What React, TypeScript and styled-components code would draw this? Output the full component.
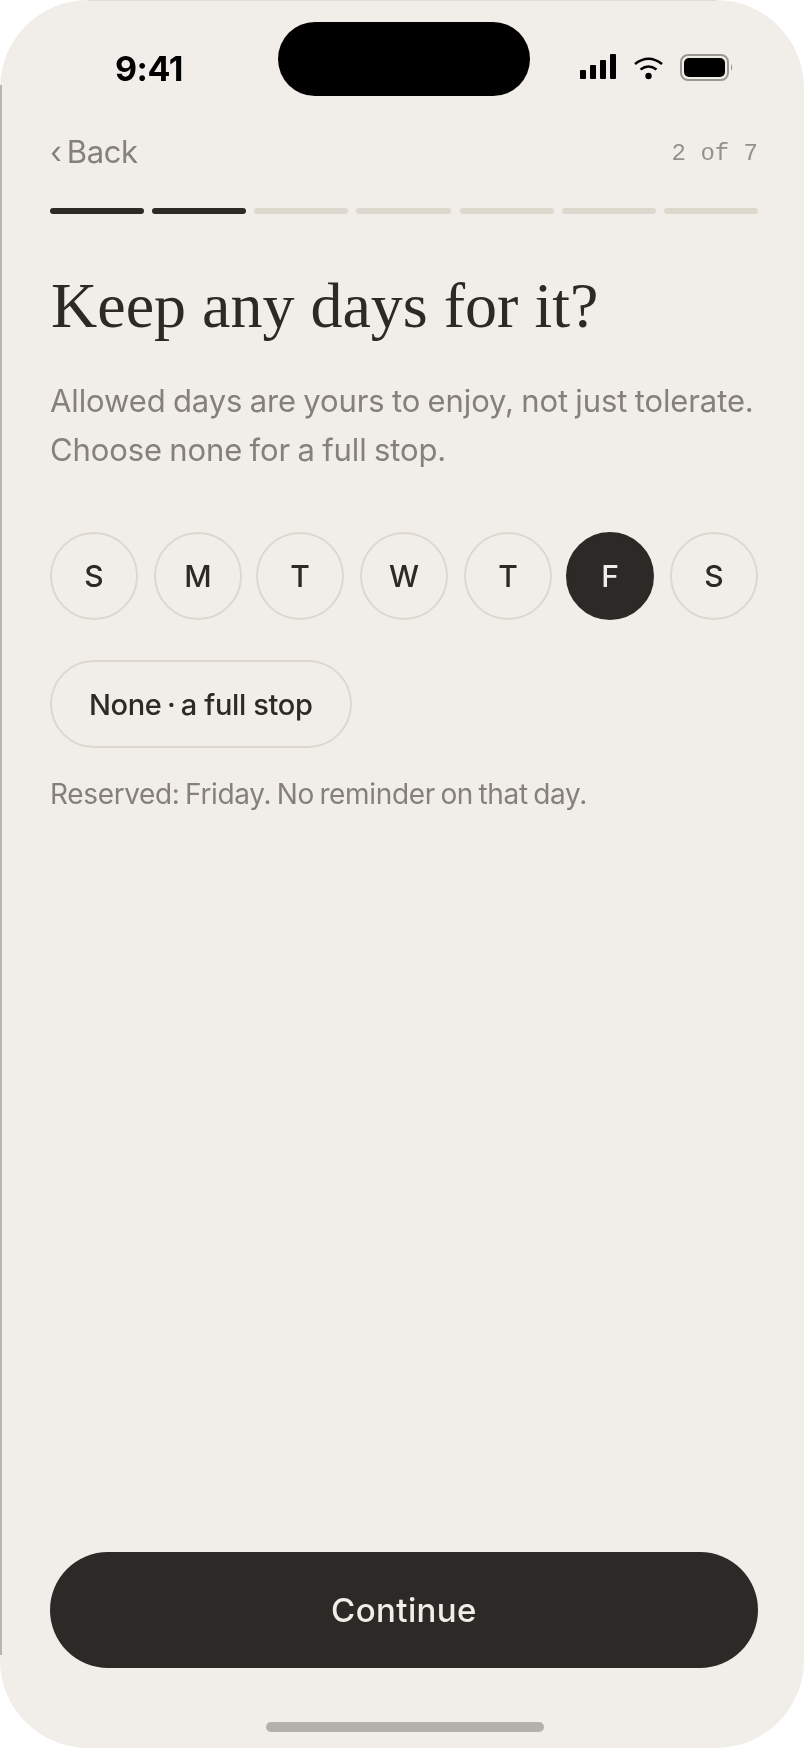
import React from "react";
import styled, { createGlobalStyle } from "styled-components";

const Global = createGlobalStyle`
  html, body { margin: 0; padding: 0; background: #fff; }
  * { box-sizing: border-box; }
`;

const Phone = styled.main`
  position: relative;
  width: 804px;
  height: 1748px;
  display: flex;
  flex-direction: column;
  padding: 0 46px 16px 50px;
  background: #f1eee9;
  border-radius: 88px;
  font-family: Inter, "Liberation Sans", sans-serif;
  color: #2d2926;
  overflow: hidden;
  filter: blur(0.45px);

  &::before {
    content: "";
    position: absolute;
    left: 0;
    top: 85px;
    bottom: 93px;
    width: 2px;
    background: #b8b5af;
  }

  &::after {
    content: "";
    position: absolute;
    left: 88px;
    right: 88px;
    top: 0;
    height: 1px;
    background: #dedbd5;
  }
`;

const Island = styled.div`
  position: absolute;
  left: 278px;
  top: 22px;
  width: 252px;
  height: 74px;
  border-radius: 37px;
  background: #000;
`;

const StatusBar = styled.div`
  height: 95px;
  display: flex;
  align-items: flex-start;
  justify-content: space-between;
  padding: 49px 0 0 65px;
`;

const Time = styled.span`
  font-size: 34px;
  line-height: 40px;
  font-weight: 700;
  color: #000;
  letter-spacing: -0.5px;
`;

const StatusIcons = styled.div`
  display: flex;
  align-items: center;
  margin: 5px 22px 0 0;
`;

const Nav = styled.div`
  margin-top: 37px;
  height: 40px;
  display: flex;
  align-items: center;
  justify-content: space-between;
`;

const Back = styled.span`
  font-size: 31px;
  line-height: 40px;
  color: #85817a;
  letter-spacing: -0.4px;
  word-spacing: -3px;
`;

const StepCount = styled.span`
  margin-top: 2px;
  font-family: "Liberation Mono", monospace;
  font-size: 24px;
  color: #94908a;
`;

const Progress = styled.div`
  margin-top: 36px;
  display: grid;
  grid-template-columns: 102px 102px 102px 104px 102px 102px 94px;
`;

const Segment = styled.div<{ $done: boolean; $wide: boolean }>`
  width: ${(p) => (p.$wide ? "95px" : "94px")};
  height: 6px;
  border-radius: 3px;
  background: ${(p) => (p.$done ? "#2d2926" : "#dcd8cd")};
`;

const Title = styled.h1`
  margin: 56px 0 0;
  padding-left: 1px;
  font-family: "Liberation Serif", serif;
  font-size: 64px;
  line-height: 72px;
  font-weight: 400;
  color: #2d2926;
`;

const Lead = styled.p`
  margin: 34px 0 0;
  font-size: 31px;
  line-height: 49px;
  color: #85817a;
  letter-spacing: -0.1px;
  word-spacing: -1.25px;
`;

const Days = styled.div`
  margin-top: 58px;
  display: grid;
  grid-template-columns: 104px 102px 104px 104px 102px 104px 88px;
`;

const Day = styled.div<{ $on?: boolean }>`
  width: 88px;
  height: 88px;
  border-radius: 50%;
  display: flex;
  align-items: center;
  justify-content: center;
  font-size: 30px;
  font-weight: 500;
  border: 2px solid ${(p) => (p.$on ? "#2d2926" : "#dcd8cd")};
  background: ${(p) => (p.$on ? "#2d2926" : "transparent")};
  color: ${(p) => (p.$on ? "#f1eee9" : "#2d2926")};
`;

const NoneButton = styled.div`
  margin-top: 40px;
  align-self: flex-start;
  width: 302px;
  height: 88px;
  padding: 0 37px;
  display: flex;
  align-items: center;
  white-space: pre;
  border: 2px solid #dcd8cd;
  border-radius: 44px;
  font-size: 29px;
  font-weight: 500;
  letter-spacing: -0.35px;
`;

const Dot = styled.span`
  margin: 0 -2px;
`;

const Note = styled.p`
  margin: 28px 0 0;
  font-size: 28px;
  line-height: 36px;
  color: #85817a;
  letter-spacing: -0.35px;
  word-spacing: -2px;
`;

const Spacer = styled.div`
  flex: 1;
`;

const Continue = styled.div`
  height: 116px;
  border-radius: 58px;
  display: flex;
  align-items: center;
  justify-content: center;
  background: #2d2926;
  color: #f1eee9;
  font-size: 33px;
  font-weight: 500;
  letter-spacing: 0.4px;
`;

const HomeBar = styled.div`
  align-self: center;
  margin: 54px 0 0 2px;
  width: 278px;
  height: 10px;
  border-radius: 5px;
  background: #b3b1ac;
`;

const StatusGlyphs = () => (
  <svg width="156" height="30" viewBox="0 0 156 30" aria-hidden="true">
    <rect x="0" y="16" width="6" height="9" rx="1" fill="#000" />
    <rect x="10" y="11" width="6" height="14" rx="1" fill="#000" />
    <rect x="20" y="6" width="6" height="19" rx="1" fill="#000" />
    <rect x="30" y="0" width="6" height="25" rx="1" fill="#000" />
    <path d="M55 10 Q68.5 -0.5 82 10" fill="none" stroke="#000" strokeWidth="2.4" />
    <path d="M60.5 15.5 Q68.5 9.5 76.5 15.5" fill="none" stroke="#000" strokeWidth="2.4" />
    <circle cx="68.5" cy="22" r="3.2" fill="#000" />
    <rect x="101" y="1" width="47" height="25" rx="7" fill="none" stroke="#9a9894" strokeWidth="2" />
    <rect x="104" y="4" width="41" height="19" rx="5" fill="#000" />
    <path d="M151 10 Q153.5 13.5 151 17 Z" fill="#9a9894" />
  </svg>
);

export default function App() {
  const days = ["S", "M", "T", "W", "T", "F", "S"];
  return (
    <>
      <Global />
      <Phone>
        <Island />
        <StatusBar>
          <Time>9:41</Time>
          <StatusIcons>
            <StatusGlyphs />
          </StatusIcons>
        </StatusBar>
        <Nav>
          <Back>‹ Back</Back>
          <StepCount>2 of 7</StepCount>
        </Nav>
        <Progress>
          {Array.from({ length: 7 }, (_, i) => (
            <Segment key={i} $done={i < 2} $wide={i === 3} />
          ))}
        </Progress>
        <Title>Keep any days for it?</Title>
        <Lead>
          Allowed days are yours to enjoy, not just tolerate.
          <br />
          Choose none for a full stop.
        </Lead>
        <Days>
          {days.map((d, i) => (
            <Day key={i} $on={i === 5}>
              {d}
            </Day>
          ))}
        </Days>
        <NoneButton>
          None <Dot>·</Dot> a full stop
        </NoneButton>
        <Note>Reserved: Friday. No reminder on that day.</Note>
        <Spacer />
        <Continue>Continue</Continue>
        <HomeBar />
      </Phone>
    </>
  );
}
